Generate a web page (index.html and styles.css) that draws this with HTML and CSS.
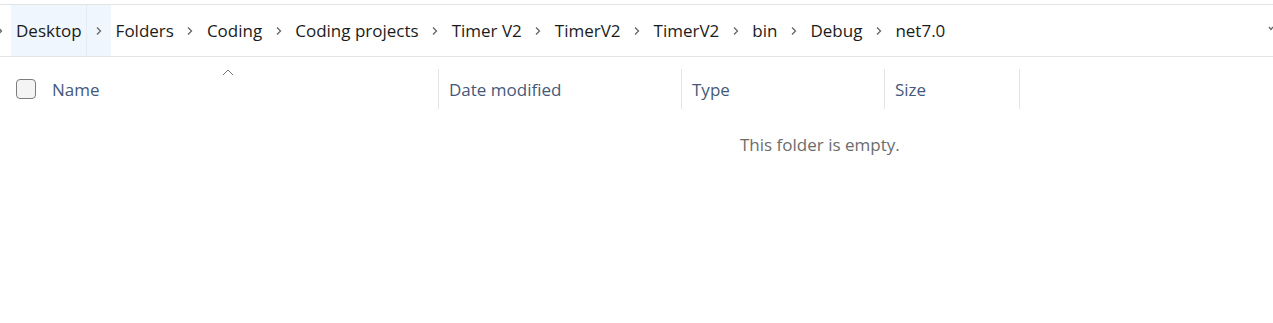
FILE: index.html
```html
<!DOCTYPE html>
<html lang="en">
<head>
  <meta charset="UTF-8">
  <meta name="viewport" content="width=device-width, initial-scale=1.0">
  <title>net7.0 - File Explorer</title>
  <link rel="stylesheet" href="styles.css">
</head>
<body>
  <div class="address-bar">
    <span class="chevron lead">
      <svg width="3" height="10" viewBox="3 0 3 10"><path d="M1 1.5 L4.5 5 L1 8.5" /></svg>
    </span>
    <span class="crumb-group current">
      <span class="crumb">Desktop</span>
      <span class="chevron"><svg width="6" height="10" viewBox="0 0 6 10"><path d="M1 1.5 L4.5 5 L1 8.5" /></svg></span>
    </span>
    <span class="crumb-group">
      <span class="crumb">Folders</span>
      <span class="chevron"><svg width="6" height="10" viewBox="0 0 6 10"><path d="M1 1.5 L4.5 5 L1 8.5" /></svg></span>
    </span>
    <span class="crumb-group">
      <span class="crumb">Coding</span>
      <span class="chevron"><svg width="6" height="10" viewBox="0 0 6 10"><path d="M1 1.5 L4.5 5 L1 8.5" /></svg></span>
    </span>
    <span class="crumb-group">
      <span class="crumb">Coding projects</span>
      <span class="chevron"><svg width="6" height="10" viewBox="0 0 6 10"><path d="M1 1.5 L4.5 5 L1 8.5" /></svg></span>
    </span>
    <span class="crumb-group">
      <span class="crumb">Timer V2</span>
      <span class="chevron"><svg width="6" height="10" viewBox="0 0 6 10"><path d="M1 1.5 L4.5 5 L1 8.5" /></svg></span>
    </span>
    <span class="crumb-group">
      <span class="crumb">TimerV2</span>
      <span class="chevron"><svg width="6" height="10" viewBox="0 0 6 10"><path d="M1 1.5 L4.5 5 L1 8.5" /></svg></span>
    </span>
    <span class="crumb-group">
      <span class="crumb">TimerV2</span>
      <span class="chevron"><svg width="6" height="10" viewBox="0 0 6 10"><path d="M1 1.5 L4.5 5 L1 8.5" /></svg></span>
    </span>
    <span class="crumb-group">
      <span class="crumb">bin</span>
      <span class="chevron"><svg width="6" height="10" viewBox="0 0 6 10"><path d="M1 1.5 L4.5 5 L1 8.5" /></svg></span>
    </span>
    <span class="crumb-group">
      <span class="crumb">Debug</span>
      <span class="chevron"><svg width="6" height="10" viewBox="0 0 6 10"><path d="M1 1.5 L4.5 5 L1 8.5" /></svg></span>
    </span>
    <span class="crumb-group">
      <span class="crumb">net7.0</span>
    </span>
    <span class="spacer"></span>
    <span class="dropdown">
      <svg width="6" height="5" viewBox="0 0 6 5"><path d="M1 1 L3 3.5 L5 1" /></svg>
    </span>
  </div>

  <div class="list-header">
    <div class="col col-name">
      <span class="checkbox"></span>
      <span class="col-label">Name</span>
      <svg class="sort-arrow" width="12" height="7" viewBox="0 0 12 7"><path d="M1 6 L6 1 L11 6" /></svg>
    </div>
    <div class="col col-date"><span class="col-label">Date modified</span></div>
    <div class="col col-type"><span class="col-label">Type</span></div>
    <div class="col col-size"><span class="col-label">Size</span></div>
  </div>

  <div class="empty">This folder is empty.</div>
</body>
</html>
```

FILE: styles.css
```css
body {
  margin: 0;
  padding-top: 4px;
  background: #fff;
  font-family: "Open Sans", "Noto Sans", sans-serif;
  font-size: 17px;
  color: #1b1b1b;
  overflow: hidden;
}

.address-bar {
  display: flex;
  align-items: stretch;
  height: 51px;
  border-top: 1px solid #e3e3e3;
  border-bottom: 1px solid #e3e3e3;
}

.crumb-group {
  display: flex;
  align-items: stretch;
}

.crumb {
  display: flex;
  align-items: center;
  padding: 0 5px;
}

.chevron {
  display: flex;
  align-items: center;
  justify-content: center;
  width: 23px;
}

.chevron svg path,
.dropdown svg path {
  fill: none;
  stroke: #666;
  stroke-width: 1.3;
}

.chevron.lead {
  width: 11px;
  justify-content: flex-start;
}

.current {
  background: #eff6fd;
}

.current .crumb {
  padding-right: 4px;
}

.current .chevron {
  width: 24px;
  border-left: 1px solid #e2ecf7;
}

.spacer {
  flex: 1;
}

.dropdown {
  display: flex;
  align-items: center;
  padding-bottom: 5px;
  margin-right: -1px;
}

.list-header {
  display: flex;
  height: 40px;
  margin-top: 12px;
  color: #45597a;
}

.col {
  display: flex;
  align-items: center;
  box-sizing: border-box;
}

.col-name {
  position: relative;
  width: 438px;
  padding-left: 16px;
  gap: 16px;
}

.col-date,
.col-type,
.col-size {
  border-left: 1px solid #e5e5e5;
  padding-left: 10px;
}

.col-date {
  width: 243px;
}

.col-type {
  width: 203px;
}

.col-size {
  width: 136px;
  border-right: 1px solid #e5e5e5;
}

.checkbox {
  width: 18px;
  height: 18px;
  border: 1px solid #7d7d7d;
  border-radius: 4px;
  background: #f4f4f4;
}

.sort-arrow {
  position: absolute;
  left: 222px;
  top: 0;
}

.sort-arrow path {
  fill: none;
  stroke: #777;
  stroke-width: 1;
}

.empty {
  margin: 24px 0 0 740px;
  color: #6c6c6c;
}
```
